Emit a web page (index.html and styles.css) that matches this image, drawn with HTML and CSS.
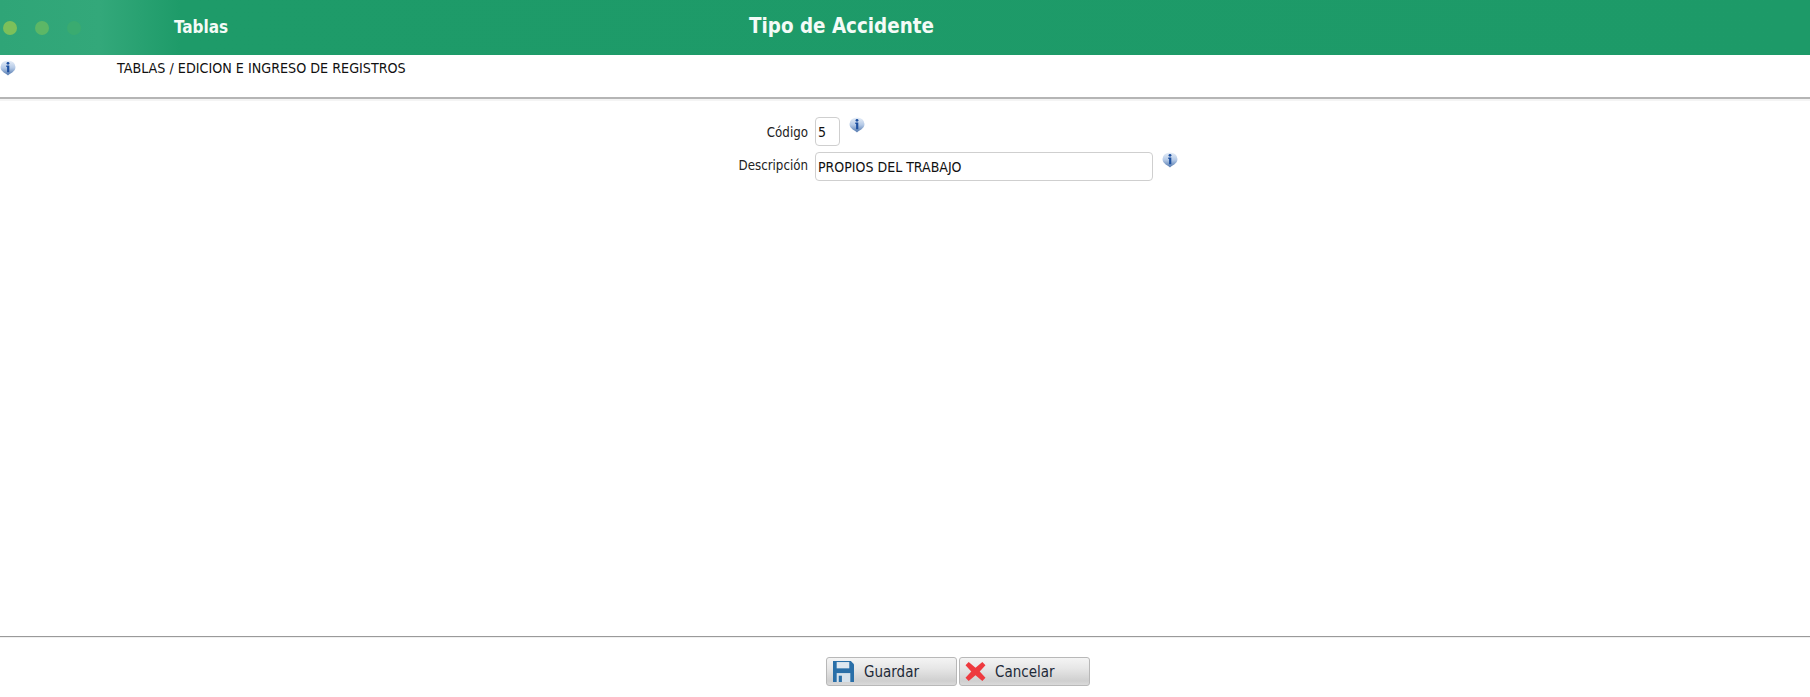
FILE: index.html
```html
<!DOCTYPE html>
<html lang="es">
<head>
<meta charset="utf-8">
<title>Tipo de Accidente</title>
<link rel="stylesheet" href="styles.css">
</head>
<body>
<svg class="defs" width="0" height="0" aria-hidden="true">
  <defs>
    <linearGradient id="infoFill" x1="0" y1="0" x2="0" y2="1">
      <stop offset="0" stop-color="#e8eff8"/>
      <stop offset="0.5" stop-color="#b4c9e6"/>
      <stop offset="1" stop-color="#4f76ad"/>
    </linearGradient>
    <symbol id="info" viewBox="0 0 16 16">
      <path d="M8 15.500 C6.500 13.500 .5 12 .5 7 A7.500 6.600 0 0 1 15.500 7 C15.500 12 9.500 13.500 8 15.500Z" fill="url(#infoFill)"/>
      <circle cx="8" cy="3.300" r="1.400" fill="#1c4f9f"/>
      <path d="M6.300 5.600h3v6.700h-2.200V6.900h-.8z" fill="#1c4f9f"/>
    </symbol>
  </defs>
</svg>
<div class="page">
  <header class="topbar">
    <div class="dots"><span class="dot dot-a"></span><span class="dot dot-b"></span><span class="dot dot-c"></span></div>
    <div class="section">Tablas</div>
    <h1 class="title">Tipo de Accidente</h1>
  </header>
  <div class="crumbs">
    <svg class="icon crumb-icon"><use href="#info"/></svg>
    <span class="crumb-text">TABLAS / EDICION E INGRESO DE REGISTROS</span>
  </div>
  <main class="form">
    <label class="label label-code" for="codigo">Código</label>
    <div class="field">
      <input class="input input-code" id="codigo" value="5">
      <svg class="icon"><use href="#info"/></svg>
    </div>
    <label class="label label-desc" for="descripcion">Descripción</label>
    <div class="field">
      <input class="input input-desc" id="descripcion" value="PROPIOS DEL TRABAJO">
      <svg class="icon"><use href="#info"/></svg>
    </div>
  </main>
  <footer class="actions">
    <button class="btn" type="button">
      <svg class="btn-icon" viewBox="0 0 20 20"><path d="M0 0h17l3 3v17H0z" fill="#2a6fa8"/><path d="M3.500 1h12v6h-12z" fill="#dfe8f0"/><path d="M3.500 11.500h13V20h-13z" fill="#d6e2ec"/><path d="M5.500 14h3v6h-3z" fill="#2a6fa8"/></svg>
      <span>Guardar</span>
    </button>
    <button class="btn btn-cancel" type="button">
      <svg class="btn-icon" viewBox="0 0 20 20"><path d="M3.500 1 10 6.500 16.500 1l3 3L14 10l5.500 6-3 3L10 13.500 3.500 19l-3-3L6 10 .5 4z" fill="#ee3a3f"/></svg>
      <span>Cancelar</span>
    </button>
  </footer>
</div>
</body>
</html>
```
FILE: styles.css
```css
* { box-sizing: border-box; }
html, body { margin: 0; padding: 0; height: 100%; background: #fff; overflow: hidden; }
body { font-family: "DejaVu Sans Condensed", "Noto Sans", "DejaVu Sans", sans-serif; font-size: 13px; color: #111; }
.defs { display: block; height: 0; }
.page { height: 697px; display: flex; flex-direction: column; }

.topbar {
  height: 55px; flex: none; display: flex; align-items: center; position: relative;
  background: linear-gradient(90deg, #2fa577 0, #33a87a 100px, #1e9b69 180px, #1d9a68 100%);
  color: #f4fbf7;
}
.dots { width: 174px; flex: none; display: flex; gap: 18px; padding-left: 3px; }
.dot { width: 14px; height: 14px; border-radius: 50%; }
.dot-a { background: #7cc05a; }
.dot-b { background: #5cb766; }
.dot-c { background: #3aab70; }
.section { font-size: 17px; font-weight: 700; margin-top: -2px; }
.title { position: absolute; left: 749px; top: 13px; margin: 0; font-size: 20.400px; font-weight: 700; line-height: 26px; }

.crumbs {
  height: 44px; flex: none; display: flex; align-items: flex-start; padding-top: 5px;
  border-bottom: 2px solid #b5b5b5; box-shadow: 0 2px 0 #f4f4f4;
}
.crumb-icon { margin-right: 101px; }
.crumb-text { font-size: 14.200px; line-height: 17px; }
.icon { width: 16px; height: 16px; flex: none; display: block; }

.form {
  flex: 1; display: grid; grid-template-columns: 808px 1fr; grid-template-rows: 35px 35px;
  column-gap: 7px; align-content: start; padding-top: 18px;
}
.label { text-align: right; font-size: 13.200px; line-height: 16px; color: #222; }
.label-code { padding-top: 8px; }
.label-desc { padding-top: 6px; }
.field { display: flex; align-items: flex-start; }
.input {
  font: inherit; font-size: 14px; color: #111; height: 29px; padding: 0 2px;
  border: 1px solid #cfcfcf; border-radius: 4px; background: #fff; outline: none;
}
.input-code { width: 25px; }
.input-desc { width: 338px; }
.field .icon { margin-left: 9px; }

.actions {
  height: 61px; flex: none; display: flex; gap: 2px; padding: 20px 0 0 826px;
  border-top: 1px solid #9a9a9a; box-shadow: inset 0 1px 0 #f0f0f0;
}
.btn {
  width: 131px; height: 29px; display: flex; align-items: center; gap: 10px; padding: 0 6px;
  font: inherit; font-size: 15px; color: #1e2a38;
  border: 1px solid #b8b8b8; border-radius: 3px;
  background: linear-gradient(180deg, #f4f4f4 0, #e6e6e6 40%, #cfcfcf 85%, #dadada 100%);
}
.btn-cancel { gap: 9px; padding-left: 5px; }
.btn-icon { width: 21px; height: 21px; flex: none; }
```
